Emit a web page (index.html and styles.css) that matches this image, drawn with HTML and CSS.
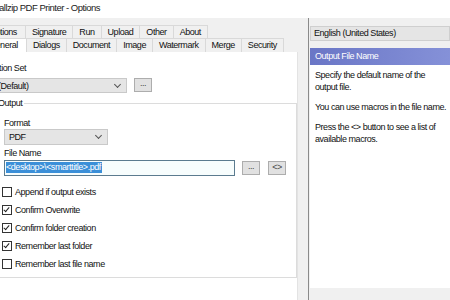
FILE: index.html
```
<!DOCTYPE html>
<html lang="en">
<head>
    <meta charset="UTF-8">
    <title>Options</title>
    <link rel="stylesheet" href="styles.css">
</head>
<body>
    <div class="title">allzip PDF Printer - Options</div>
    <div class="main">
        <div class="left">
            <div class="tabs row1">
                <div class="tab">Options</div>
                <div class="tab">Signature</div>
                <div class="tab">Run</div>
                <div class="tab">Upload</div>
                <div class="tab">Other</div>
                <div class="tab">About</div>
            </div>
            <div class="tabs row2">
                <div class="tab active">General</div>
                <div class="tab">Dialogs</div>
                <div class="tab">Document</div>
                <div class="tab">Image</div>
                <div class="tab">Watermark</div>
                <div class="tab">Merge</div>
                <div class="tab">Security</div>
            </div>
            <div class="panel">
                <div class="label cut">Option Set</div>
                <div class="row">
                    <div class="combo set-combo"><span>(Default)</span><span class="chev"></span></div>
                    <div class="btn">...</div>
                </div>
                <fieldset class="group">
                    <legend>Output</legend>
                    <div class="label">Format</div>
                    <div class="combo fmt-combo"><span>PDF</span><span class="chev"></span></div>
                    <div class="label">File Name</div>
                    <div class="row">
                        <div class="input"><span class="sel">&lt;desktop&gt;\&lt;smarttitle&gt;.pdf</span></div>
                        <div class="btn">...</div>
                        <div class="btn macro">&lt;&gt;</div>
                    </div>
                    <div class="checks">
                        <label class="check"><span class="box"></span>Append if output exists</label>
                        <label class="check"><span class="box on"></span>Confirm Overwrite</label>
                        <label class="check"><span class="box on"></span>Confirm folder creation</label>
                        <label class="check"><span class="box on"></span>Remember last folder</label>
                        <label class="check"><span class="box"></span>Remember last file name</label>
                    </div>
                </fieldset>
            </div>
        </div>
        <div class="right">
            <div class="lang">English (United States)</div>
            <div class="help">
                <div class="help-head">Output File Name</div>
                <div class="help-body">
                    <p>Specify the default name of the output file.</p>
                    <p>You can use macros in the file name.</p>
                    <p>Press the &lt;&gt; button to see a list of available macros.</p>
                </div>
            </div>
        </div>
    </div>
</body>
</html>
```

FILE: styles.css
```
body {
    margin: 0;
    width: 450px;
    height: 300px;
    overflow: hidden;
    font-family: 'Liberation Sans', Arial, sans-serif;
    font-size: 9px;
    letter-spacing: -0.45px;
    color: #111;
    background-color: #f0f0f0;
}
.title {
    height: 18px;
    line-height: 15px;
    font-size: 9.5px;
    letter-spacing: -0.5px;
    background-color: #fff;
    margin-left: -1px;
    color: #222;
}
.main {
    display: flex;
    height: 282px;
}
.left {
    width: 298px;
    overflow: hidden;
    padding-top: 7px;
}
.tabs {
    display: flex;
    height: 13px;
}
.row1 {
    margin-left: -18px;
}
.row1 .tab:first-child {
    padding-right: 8px;
}
.row2 {
    height: 14px;
    margin-left: -18px;
}
.row2 .tab:first-child {
    padding-right: 8px;
}
.tab {
    padding: 0 6px;
    border: 1px solid #d9d9d9;
    border-bottom: none;
    margin-right: -1px;
    line-height: 13px;
    background-color: #f0f0f0;
    white-space: nowrap;
}
.tab.active {
    background-color: #fff;
}
.panel {
    background-color: #fff;
    height: 238px;
    border-right: 1px solid #e3e3e3;
    padding-top: 10px;
}
.label {
    height: 12px;
    line-height: 12px;
}
.cut {
    margin-left: -12px;
}
.row {
    display: flex;
    align-items: flex-start;
    gap: 7px;
}
.combo {
    display: flex;
    justify-content: space-between;
    align-items: center;
    background-color: #e5e5e5;
    border: 1px solid #c9c9c9;
    padding: 0 4px;
    overflow: hidden;
}
.set-combo {
    width: 124px;
    height: 13px;
    margin: 4px 0 0 -7px;
}
.fmt-combo {
    width: 94px;
    height: 14px;
    margin: 0 0 2px;
}
.chev {
    width: 4px;
    height: 4px;
    border-right: 1px solid #555;
    border-bottom: 1px solid #555;
    transform: rotate(45deg);
    margin-top: -3px;
    margin-right: 2px;
}
.btn {
    width: 16px;
    height: 12px;
    line-height: 9px;
    text-align: center;
    background-color: #e1e1e1;
    border: 1px solid #adadad;
    margin-top: 4px;
    font-size: 9px;
    color: #444;
}
.btn.macro {
    margin-left: 1px;
    line-height: 11px;
}
.group {
    margin: 5px 5px 0 -10px;
    padding: 9px 10px 0 13px;
    border: 1px solid #dcdcdc;
    height: 169px;
}
.group legend {
    padding: 0 2px;
    margin-left: -8px;
}
.input {
    width: 227px;
    height: 13px;
    border: 1px solid #5b7b8f;
    background-color: #f7fdfd;
    padding: 1px 1px 0;
    margin-top: 1px;
}
.input + .btn,
.input ~ .macro {
    margin-top: 2px;
}
.sel {
    display: inline-block;
    background-color: #3b8fd8;
    color: #fff;
    line-height: 11px;
    padding-right: 1px;
}
.checks {
    margin-top: 7px;
}
.check {
    display: flex;
    align-items: center;
    gap: 3px;
    height: 18px;
    margin-left: -2px;
}
.box {
    width: 8px;
    height: 8px;
    border: 1px solid #333;
    background-color: #fff;
    position: relative;
}
.box.on::after {
    content: '';
    position: absolute;
    left: 2px;
    top: 0;
    width: 2px;
    height: 5px;
    border-right: 1px solid #222;
    border-bottom: 1px solid #222;
    transform: rotate(40deg);
}
.right {
    flex: 1;
    margin-left: 10px;
    padding-top: 8px;
    border-left: 1px solid #8a8a8a;
    background-color: #f0f0f0;
}
.lang {
    margin-left: 1px;
    height: 13px;
    line-height: 13px;
    background-color: #e5e5e5;
    border: 1px solid #cfcfcf;
    padding-left: 3px;
}
.help {
    margin-top: 7px;
    margin-left: 1px;
    background-color: #fff;
    height: 240px;
}
.help-head {
    height: 17px;
    line-height: 17px;
    padding-left: 5px;
    color: #fff;
    background: linear-gradient(90deg, #6a76c6, #8591d8);
}
.help-body {
    padding: 4px 2px 0 5px;
    line-height: 12px;
}
.help-body p {
    margin: 0 0 8px;
}
```
